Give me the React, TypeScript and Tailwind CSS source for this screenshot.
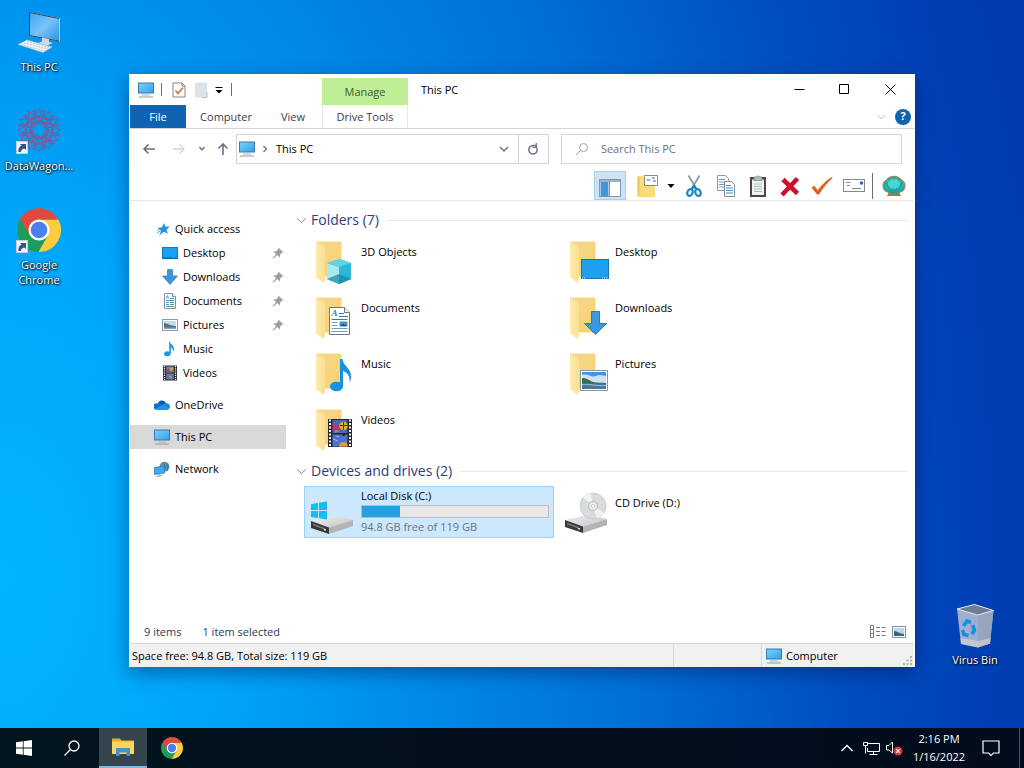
import { useState } from "react";
import type { ReactNode } from "react";

type IconProps = { className?: string };

/* ---------- small icons ---------- */

function PcIcon({ className = "size-4" }: IconProps) {
  return (
    <svg viewBox="0 0 16 16" className={className} aria-hidden="true">
      <defs>
        <linearGradient id="screen" x1="0" y1="0" x2="1" y2="1">
          <stop offset="0" stopColor="#7fd0fb" />
          <stop offset="1" stopColor="#2aa3ee" />
        </linearGradient>
      </defs>
      <rect x="0.5" y="1" width="15" height="10" fill="url(#screen)" stroke="#3c7ba6" />
      <path d="M4 13h8" stroke="#9fb4c4" />
      <path d="M1 15h14" stroke="#8f9aa3" />
    </svg>
  );
}

function StarIcon() {
  return (
    <svg viewBox="0 0 16 16" className="size-4" aria-hidden="true">
      <path d="M10 2l1.500 3.800 4.300-.3-3.300 3.200 1.400 4.300-3.900-2.200L6 13.800l.8-4.400-3.300-2.600 4.300-.4z" fill="#2390d8" />
      <path d="M3 9.500l3-1M3 12.200l3-2M5.200 14.200l2-1.500" stroke="#58b4ec" />
    </svg>
  );
}

function DesktopIcon() {
  return (
    <svg viewBox="0 0 16 16" className="size-4" aria-hidden="true">
      <rect x="0.5" y="2.5" width="15" height="11" fill="#18a0f5" stroke="#1479b8" />
      <path d="M1 13h14" stroke="#0d5c92" strokeDasharray="9 1 1 1" />
    </svg>
  );
}

function DownloadIcon() {
  return (
    <svg viewBox="0 0 16 16" className="size-4" aria-hidden="true">
      <path d="M5.5 0.5h5V7h5L8 15.5 0.5 7h5z" fill="#3d96dd" stroke="#2d7cbd" strokeWidth="0.7" />
    </svg>
  );
}

function DocumentIcon() {
  return (
    <svg viewBox="0 0 16 16" className="size-4" aria-hidden="true">
      <path d="M2.5 0.5h8l3 3v12h-11z" fill="#fff" stroke="#8a8f94" />
      <path d="M10.5 0.5v3h3" fill="#fff" stroke="#8a8f94" />
      <path d="M4 5.5l1.5-3 1 3M8 5.5h4M4 7.5h8M4 9.5h3M8 9.5h4M4 11.5h3M8 11.5h4M4 13.5h8" stroke="#4688b5" fill="none" strokeWidth="0.9" />
    </svg>
  );
}

function PictureIcon() {
  return (
    <svg viewBox="0 0 16 16" className="size-4" aria-hidden="true">
      <rect x="0.5" y="2.5" width="15" height="11" fill="#fff" stroke="#8f979d" />
      <rect x="2" y="4" width="12" height="8" fill="#b9dcf2" />
      <path d="M2 6c4 .5 7 3 12 3v3H2z" fill="#4f7382" />
      <path d="M2 10.500h12v1.500H2z" fill="#7fa3bd" />
    </svg>
  );
}

function MusicIcon() {
  return (
    <svg viewBox="0 0 16 16" className="size-4" aria-hidden="true">
      <ellipse cx="5.300" cy="12.800" rx="3.200" ry="2.500" fill="#159ae6" />
      <path d="M7.500 0.500c.6 3 5.500 4 3.800 9.500C11.300 7.500 9.500 6.500 8.500 6.200v6.600h-1z" fill="#159ae6" stroke="#159ae6" strokeWidth="0.6" />
    </svg>
  );
}

function VideoIcon() {
  return (
    <svg viewBox="0 0 16 16" className="size-4" aria-hidden="true">
      <rect x="1" y="0.500" width="14" height="15" fill="#2e2e33" />
      <path d="M2.500 1v14M13.500 1v14" stroke="#f2f2f2" strokeWidth="1.200" strokeDasharray="1.200 1" />
      <rect x="4.200" y="1.500" width="7.600" height="6" fill="#6c7fae" />
      <rect x="4.200" y="8.500" width="7.600" height="6" fill="#5a76b8" />
      <circle cx="9.300" cy="4" r="1.800" fill="#d5a63a" />
      <path d="M4.200 5.500l3-2 1 4h-4z" fill="#a04a66" />
      <circle cx="8.500" cy="12" r="1.500" fill="#c48f40" />
    </svg>
  );
}

function CloudIcon() {
  return (
    <svg viewBox="0 0 16 16" className="size-4" aria-hidden="true">
      <path d="M3.800 7a4.400 4.400 0 0 1 8.400-.8L8.500 9.500l-5 1z" fill="#0d5cb4" />
      <path d="M3.800 6.500C6 6.300 7.500 7 8.500 8l-7 4.500A3 3 0 0 1 3.800 6.500z" fill="#1472c9" />
      <path d="M8.500 8c1.200-1.400 2.500-2 4-1.700a3.300 3.300 0 0 1 1.700 6.200z" fill="#1a86dc" />
      <path d="M1.200 12.200L8.500 8l6 4.300a2.800 2.800 0 0 1-1.500.7H3a3 3 0 0 1-1.800-.8z" fill="#2493e8" />
    </svg>
  );
}

function NetworkIcon() {
  return (
    <svg viewBox="0 0 16 16" className="size-4" aria-hidden="true">
      <circle cx="10.500" cy="5.800" r="5" fill="#5f93b5" />
      <path d="M9 1.500c2 2 3 5 1.500 8M13 2.500c1 2 1 5 0 7" stroke="#2f6484" fill="none" strokeWidth="0.800" />
      <path d="M0.500 6.500l10-1.500v7l-10 1.500z" fill="#3fa9ee" stroke="#2d7fb5" strokeWidth="0.800" />
      <path d="M5 13v1.500M2.500 15.500l5.500-1" stroke="#8297a5" />
    </svg>
  );
}

function PinIcon() {
  return (
    <svg viewBox="0 0 12 12" className="size-3" aria-hidden="true">
      <path d="M6.500 0.500l5 5-1.500.3-1.800 1.800-.4 3-2.600-2.600L1 12l-.5-.5L4 7 1.500 4.500l3-.4L6.300 2z" fill="#9aa0a4" />
    </svg>
  );
}

function ChevronDown({ className = "" }: IconProps) {
  return (
    <svg viewBox="0 0 12 8" className={className} fill="none" stroke="currentColor" aria-hidden="true">
      <path d="M1 1.500l5 5 5-5" />
    </svg>
  );
}

/* ---------- large icons, 48 x 48 ---------- */

function FolderIcon({ children }: { children: ReactNode }) {
  return (
    <svg viewBox="0 0 48 48" className="size-12 shrink-0" aria-hidden="true">
      <defs>
        <linearGradient id="folderBack" x1="0" y1="0" x2="1" y2="1">
          <stop offset="0" stopColor="#f6d88a" />
          <stop offset="1" stopColor="#f7d274" />
        </linearGradient>
        <linearGradient id="folderFront" x1="0" y1="0" x2="1" y2="0">
          <stop offset="0" stopColor="#fdeaac" />
          <stop offset="1" stopColor="#fbdf92" />
        </linearGradient>
      </defs>
      <path d="M7 4.500h24a1.500 1.500 0 0 1 1.500 1.500v33.500H14L7 38z" fill="url(#folderBack)" />
      <path d="M7 4.500l7.500 4.500c1.300.8 1.500 1.500 1.500 3v28c0 3-.8 6-2 5.500L7.500 40.500A2 2 0 0 1 7 39z" fill="url(#folderFront)" />
      {children}
    </svg>
  );
}

const cube = (
  <>
    <path d="M18 26l13-4 11 4v16l-12 5-12-5z" fill="#35bcd4" />
    <path d="M18 26l12 4v17l-12-5z" fill="#a5e8ef" />
    <path d="M30 30l12-4v16l-12 5z" fill="#2cb7d6" />
    <path d="M18 26l13-4 11 4-12 4z" fill="#5fd3e4" />
    <path d="M18 42l12-5 12 5-12 5z" fill="#0f86a3" opacity="0.7" />
  </>
);

const desktopScreen = (
  <>
    <rect x="18.500" y="22.500" width="27" height="19" fill="#1d9ff2" stroke="#1876b5" />
    <path d="M19 41h26" stroke="#d7efff" strokeDasharray="1 1 1 17 1 1 1 1 1 1" />
  </>
);

const documentSheet = (
  <>
    <path d="M20.500 14.500h15l5 5v22h-20z" fill="#fff" stroke="#6f767c" />
    <path d="M35.500 14.500v5h5" fill="#f2f5f7" stroke="#6f767c" />
    <text x="22.500" y="23" fontSize="9" fontStyle="italic" fontWeight="700" fill="#2c7fc0" fontFamily="Liberation Serif, serif">
      A
    </text>
    <path d="M30 20.500h5M30 23.500h9M22.500 26.500h16" stroke="#2c7fc0" />
    <rect x="30.500" y="28.500" width="8" height="5" fill="#468fc9" />
    <path d="M31 33l3-2 4 2z" fill="#274b60" />
    <path d="M22.500 29.500h6M22.500 32.500h6M22.500 35.500h16M22.500 38.500h16" stroke="#73a0bf" />
  </>
);

const downloadArrow = (
  <path d="M28.500 18.500h8v12h7L32.500 41.500 21.500 30.500h7z" fill="#3a97e0" stroke="#2f78b5" />
);

const musicNote = (
  <>
    <ellipse cx="27.500" cy="37.500" rx="6.500" ry="4.800" fill="#1494e0" />
    <path d="M31 10h2.500c.5 7.500 8.500 8 8.500 18 0 2-.5 4-1.200 5.500C41 26 37.500 23 34 22v15.500h-3z" fill="#1494e0" />
  </>
);

const pictureFrame = (
  <>
    <rect x="17.500" y="21.500" width="27" height="20" fill="#fff" stroke="#8b959c" />
    <rect x="19" y="23" width="24" height="17" fill="#4e8fe0" />
    <path d="M19 26c6-2 9 3 14 1s7 0 10 0v7H19z" fill="#cbe3f6" />
    <path d="M19 29c3-.5 6 1 9 3s9 1.500 15 2v2H19z" fill="#3d6a4a" />
    <path d="M19 34.500h24V40H19z" fill="#45799b" />
    <path d="M19 35.500c8-1 14 2 24 1" stroke="#9cc0d3" fill="none" />
  </>
);

const filmStrip = (
  <>
    <rect x="19" y="14" width="24" height="28" fill="#26262b" />
    <path d="M21 14.500v27M41 14.500v27" stroke="#f4f4f4" strokeWidth="2" strokeDasharray="2 1.500" />
    <rect x="23.500" y="15" width="15" height="13" fill="#4767bd" />
    <rect x="23.500" y="29.500" width="15" height="12" fill="#4b72d2" />
    <circle cx="34.500" cy="21" r="4.200" fill="#e8b021" />
    <path d="M31 20.500h8M34.500 17v8" stroke="#51301e" />
    <path d="M23.500 19l5 1 3 4-8 2z" fill="#c7325d" />
    <path d="M26 25l5 1-5 2z" fill="#5eb44e" />
    <path d="M32 28h5l-1.500 3h-2z" fill="#37291e" />
    <path d="M30 41.500a4.500 4.500 0 0 1 8.500-2v2z" fill="#e59b24" />
    <path d="M24 34l5 2M27 31l3 1" stroke="#9ab1ef" />
  </>
);

function DriveBody() {
  return (
    <>
      <defs>
        <linearGradient id="driveTop" x1="0" y1="0" x2="1" y2="1">
          <stop offset="0" stopColor="#f2f2f2" />
          <stop offset="1" stopColor="#c4c4c6" />
        </linearGradient>
      </defs>
      <path d="M2 32l24-5.500 18 4.500-24 7.500z" fill="url(#driveTop)" />
      <path d="M20 38.500l24-7.500v6l-24 8z" fill="#b4b4b7" />
      <path d="M2 32l18 6.500V45L2 39z" fill="#37383b" />
      <path d="M4 35.500l12 4.500" stroke="#77787c" strokeWidth="1.500" />
      <path d="M15 40.500l2 .6" stroke="#e3ffe5" strokeWidth="1.500" />
    </>
  );
}

function LocalDiskIcon() {
  return (
    <svg viewBox="0 0 48 48" className="size-12 shrink-0" aria-hidden="true">
      <DriveBody />
      <path d="M2 15l7-1v7H2zM10 13.800L18 12.500V21h-8zM2 22h7v7l-7-1zM10 22h8v8.500l-8-1.300z" fill="#17bdef" />
    </svg>
  );
}

function CdDriveIcon() {
  return (
    <svg viewBox="0 0 48 48" className="size-12 shrink-0" aria-hidden="true">
      <DriveBody />
      <circle cx="30" cy="18" r="13" fill="#d9dcde" stroke="#b9bdc0" strokeWidth="0.600" />
      <path d="M30 18L20 9.500A13 13 0 0 1 28 5.200zM30 18l11 7a13 13 0 0 1-7 5.400z" fill="#f0f2f3" />
      <circle cx="30" cy="18" r="4.500" fill="#eceff0" stroke="#b3b8bb" />
      <circle cx="30" cy="18" r="1.800" fill="#fff" stroke="#aab0b3" strokeWidth="0.600" />
    </svg>
  );
}

/* ---------- desktop icons ---------- */

function ShortcutArrow() {
  return (
    <>
      <rect x="1.500" y="34.500" width="11" height="12" fill="#f4f7fa" stroke="#c6ccd3" />
      <path d="M3.500 45c-.5-3.500 1-5.500 3-6.200L5 37h6v6l-1.800-1.500C7 42 6 43 6 45z" fill="#2b548c" />
    </>
  );
}

function ComputerArt() {
  return (
    <svg viewBox="0 0 48 48" className="size-12" aria-hidden="true">
      <defs>
        <linearGradient id="bigScreen" x1="0" y1="0" x2="1" y2="1">
          <stop offset="0" stopColor="#3fa6ee" />
          <stop offset="0.500" stopColor="#78c4f8" />
          <stop offset="1" stopColor="#2c92e4" />
        </linearGradient>
      </defs>
      <path d="M14.500 4.500l30 6V33l-30-5.500z" fill="url(#bigScreen)" stroke="#b7cad6" />
      <path d="M44 10.500l-29.500-6v23L44 33" fill="none" stroke="#29465a" />
      <path d="M27 29.500l7 1.500v3l4 1-6 2.500-9-2.500 4-1.500z" fill="#cfd8de" />
      <path d="M3 36.500l9-4.500 25 7-9 5.500z" fill="#eef2f5" stroke="#b2bfc8" strokeWidth="0.600" />
      <path d="M6 37l24 6M9 35l24 6M12 33.500l22 6" stroke="#a9b5be" strokeWidth="0.700" strokeDasharray="2 1" />
    </svg>
  );
}

const PETALS = [0, 30, 60, 90, 120, 150, 180, 210, 240, 270, 300, 330];

function DataWagonArt() {
  return (
    <svg viewBox="0 0 48 48" className="size-12" aria-hidden="true">
      <g fill="none" stroke="#8a4f8f" strokeWidth="1" opacity="0.800">
        {PETALS.map((deg) => (
          <g key={deg} transform={`rotate(${deg} 24 23)`}>
            <path d="M24 17l-4.500-7L24 1.500l4.500 8.500z" />
            <path d="M17 3.500l7 7 7-7M20 16l4-3 4 3" />
            <circle cx="24" cy="10" r="1.200" fill="#c63e5c" stroke="#c63e5c" />
            <circle cx="19" cy="4" r="1" fill="#c63e5c" stroke="none" />
            <circle cx="24" cy="16" r="1.200" fill="#c63e5c" stroke="none" />
          </g>
        ))}
      </g>
      <ShortcutArrow />
    </svg>
  );
}

function ChromeRings() {
  return (
    <>
      <path d="M24 24L5 13A22 22 0 0 1 43 13z" fill="#dd4b3e" />
      <path d="M24 24L43 13a22 22 0 0 1-19.500 33z" fill="#fcce3e" />
      <path d="M24 24v22A22 22 0 0 1 5 13z" fill="#1d9d59" />
      <path d="M24 13.500h19.300L33 29z" fill="#fcce3e" />
      <path d="M24 13.500h19.300L43 13 24 11z" fill="#dd4b3e" />
      <path d="M14.900 29.200L5 13l12 3z" fill="#dd4b3e" />
      <path d="M33 29.200L23.500 46 19 33z" fill="#1d9d59" />
      <circle cx="24" cy="24" r="10.500" fill="#fff" />
      <circle cx="24" cy="24" r="8.300" fill="#4a80ee" />
    </>
  );
}

function ChromeArt() {
  return (
    <svg viewBox="0 0 48 48" className="size-12" aria-hidden="true">
      <ChromeRings />
      <ShortcutArrow />
    </svg>
  );
}

function BinArt() {
  return (
    <svg viewBox="0 0 48 48" className="size-12" aria-hidden="true">
      <path d="M6 8l4 35 17 3.500 12-4L42.500 9.500l-16 4.500z" fill="#b9c3d3" opacity="0.850" />
      <path d="M26.500 14L27 46.500l12-4L42.500 9.500z" fill="#95a2ba" opacity="0.850" />
      <path d="M9.500 37l17.500 3 12.500-3-.5 5.500-12 4-17-3.500z" fill="#dcd9cf" opacity="0.600" />
      <path d="M6 8l17.500-4.500L42.500 9.500l-16 4.500z" fill="#6d7c93" stroke="#e6ebf2" />
      <g fill="none" stroke="#178fe0" strokeWidth="3.600">
        <path d="M12.500 25l3.500-5 4 1.500M21.500 24l2 5-2.500 4M17.500 34.500l-4.500-1-1.500-4.500" />
      </g>
    </svg>
  );
}

function DesktopShortcut({ label, children }: { label: string; children: ReactNode }) {
  return (
    <button type="button" className="flex w-[76px] flex-col items-center">
      {children}
      <span className="mt-[3px] max-w-[72px] leading-[15px] text-white [text-shadow:1px_1px_2px_#000,0_0_2px_#000]">
        {label}
      </span>
    </button>
  );
}

/* ---------- window chrome ---------- */

function TitleBar() {
  return (
    <header className="flex h-[31px] items-center">
      <div className="flex w-[192px] items-center pl-2">
        <PcIcon />
        <span className="ml-[7px] h-[13px] w-px bg-gray-500" />
        <button type="button" aria-label="Properties" className="ml-[10px]">
          <svg viewBox="0 0 14 16" className="h-4 w-[14px]">
            <path d="M1 1h9l3 3v11H1z" fill="#fff" stroke="#8d8580" />
            <path d="M10 1v3h3" fill="none" stroke="#8d8580" />
            <path d="M3.500 8.500l2.500 3 5-6" fill="none" stroke="#d0703c" strokeWidth="1.700" />
          </svg>
        </button>
        <button type="button" aria-label="New folder" className="ml-2">
          <svg viewBox="0 0 14 16" className="h-4 w-[14px]">
            <path d="M1 0.500h12v15H1z" fill="#dce3eb" />
            <path d="M13 9.500v6H8" fill="none" stroke="#b9c3ce" />
          </svg>
        </button>
        <button type="button" aria-label="Customize Quick Access Toolbar" className="ml-[7px]">
          <svg viewBox="0 0 8 8" className="size-2">
            <path d="M0.500 1.500h7" stroke="#000" />
            <path d="M0.500 4h7L4 7.500z" />
          </svg>
        </button>
        <span className="ml-2 h-[13px] w-px bg-gray-500" />
      </div>
      <div className="flex h-[27px] w-[86px] items-center justify-center self-end bg-[#c0ee96] pt-0.5 text-[#3d5a2c]">
        Manage
      </div>
      <h1 className="ml-[13px] flex-1 pt-0.5">This PC</h1>
      <button type="button" aria-label="Minimize" className="flex h-full w-[45px] items-center justify-center">
        <svg viewBox="0 0 11 11" className="size-[11px]">
          <path d="M0.500 5.500h10" stroke="#000" />
        </svg>
      </button>
      <button type="button" aria-label="Maximize" className="flex h-full w-[45px] items-center justify-center">
        <svg viewBox="0 0 11 11" className="size-[11px]">
          <path d="M0.500 0.500h9v9h-9z" fill="none" stroke="#000" />
        </svg>
      </button>
      <button type="button" aria-label="Close" className="flex h-full w-[47px] items-center justify-center">
        <svg viewBox="0 0 11 11" className="size-[11px]">
          <path d="M0.500 0.500l10 10M10.500 0.500l-10 10" stroke="#000" />
        </svg>
      </button>
    </header>
  );
}

function RibbonTabs() {
  return (
    <nav className="flex h-6 items-center border-b border-gray-300 text-gray-700">
      <button type="button" className="h-full w-14 bg-[#0f63b0] pt-0.5 text-white">
        File
      </button>
      <button type="button" className="h-full w-20 pt-0.5">
        Computer
      </button>
      <button type="button" className="h-full w-[54px] pt-0.5">
        View
      </button>
      <button type="button" className="ml-0.5 h-full w-[86px] border-x border-gray-200 pt-0.5">
        Drive Tools
      </button>
      <span className="flex-1" />
      <button type="button" aria-label="Expand the Ribbon" className="text-gray-400">
        <ChevronDown className="h-[6px] w-[9px]" />
      </button>
      <button
        type="button"
        aria-label="Help"
        className="mr-[3px] ml-[9px] flex size-4 items-center justify-center rounded-full bg-[#0f63b0] font-bold text-white"
      >
        ?
      </button>
    </nav>
  );
}

function AddressRow() {
  const [query, setQuery] = useState("");

  return (
    <div className="flex items-center pt-[5px] pr-3">
      <div className="flex w-[106px] shrink-0 items-center text-gray-500">
        <button type="button" aria-label="Back" className="ml-3">
          <svg viewBox="0 0 14 12" className="h-3 w-[14px]" fill="none" stroke="currentColor" strokeWidth="1.600">
            <path d="M13 6H2M6.500 1.500L2 6l4.500 4.500" />
          </svg>
        </button>
        <button type="button" aria-label="Forward" className="ml-4 text-gray-300">
          <svg viewBox="0 0 14 12" className="h-3 w-[14px]" fill="none" stroke="currentColor" strokeWidth="1.300">
            <path d="M1 6h11M7.500 1.500L12 6l-4.500 4.500" />
          </svg>
        </button>
        <button type="button" aria-label="Recent locations" className="ml-3">
          <svg viewBox="0 0 8 6" className="h-[6px] w-2" fill="none" stroke="currentColor" strokeWidth="1.400">
            <path d="M1.500 1L4 4l2.500-3" />
          </svg>
        </button>
        <button type="button" aria-label="Up" className="ml-[11px]">
          <svg viewBox="0 0 12 14" className="h-[14px] w-3" fill="none" stroke="currentColor" strokeWidth="1.600">
            <path d="M6 13V2M1.500 6.500L6 2l4.500 4.500" />
          </svg>
        </button>
      </div>
      <div className="flex h-[30px] flex-[11_1_0%] items-center border border-gray-300">
        <PcIcon className="ml-0.5 h-4 w-4" />
        <svg viewBox="0 0 6 8" className="ml-[7px] h-2 w-[6px] text-gray-500" fill="none" stroke="currentColor" strokeWidth="1.300">
          <path d="M1.500 1L4.500 4l-3 3" />
        </svg>
        <span className="ml-2 flex-1">This PC</span>
        <button type="button" aria-label="Previous locations" className="mr-[9px] text-gray-500">
          <svg viewBox="0 0 10 8" className="h-2 w-[10px]" fill="none" stroke="currentColor" strokeWidth="1.500">
            <path d="M1 2l4 4 4-4" />
          </svg>
        </button>
        <button
          type="button"
          aria-label="Refresh"
          className="flex h-full w-[30px] items-center justify-center border-l border-gray-300 text-gray-500"
        >
          <svg viewBox="0 0 12 12" className="size-3" fill="none" stroke="currentColor" strokeWidth="1.500">
            <path d="M9.800 5A4.200 4.200 0 1 1 6 2.600h3" />
            <path d="M9.300 0v4.300H5.500" strokeWidth="1.300" />
          </svg>
        </button>
      </div>
      <label className="ml-3 flex h-[30px] flex-[12_1_0%] items-center border border-gray-300">
        <svg viewBox="0 0 14 14" className="ml-[13px] size-[14px] text-gray-400" fill="none" stroke="currentColor">
          <circle cx="8.500" cy="5.500" r="4" />
          <path d="M5.500 8.500L1 13" />
        </svg>
        <input
          type="text"
          aria-label="Search This PC"
          placeholder="Search This PC"
          value={query}
          onChange={(e) => setQuery(e.target.value)}
          className="ml-3 min-w-0 flex-1 bg-transparent outline-none placeholder:text-gray-500"
        />
      </label>
    </div>
  );
}

function ToolButton({ label, children }: { label: string; children: ReactNode }) {
  return (
    <button type="button" aria-label={label} className="flex w-8 items-center justify-center">
      <svg viewBox="0 0 24 24" className="size-6">
        {children}
      </svg>
    </button>
  );
}

function Toolbar() {
  return (
    <div className="mt-[7px] flex h-[30px] items-center justify-end border-b border-gray-200 pr-2">
      <button
        type="button"
        aria-label="Navigation pane"
        className="mr-[6px] flex h-[29px] w-8 items-center justify-center border border-[#a6cfea] bg-[#cce4f4]"
      >
        <svg viewBox="0 0 22 18" className="mt-1 h-[18px] w-[22px]">
          <rect x="0.500" y="0.500" width="21" height="17" fill="#fff" stroke="#8298aa" />
          <path d="M1 2h20" stroke="#8298aa" strokeWidth="1.500" />
          <rect x="1.500" y="3" width="8" height="14" fill="#3f96dc" />
          <path d="M10.500 3v14" stroke="#8298aa" />
        </svg>
      </button>
      <ToolButton label="Folder options">
        <path d="M1 2h6v1h12v20H1z" fill="#f8dc7f" />
        <path d="M3 3v18" stroke="#e9bd4b" />
        <path d="M8.500 1.500h13v10h-13z" fill="#fff" stroke="#7d8b96" />
        <path d="M10.500 6h4M16 4h3M17 7h3" stroke="#3f6f95" />
      </ToolButton>
      <button type="button" aria-label="More folder options" className="flex w-[14px] justify-center">
        <svg viewBox="0 0 8 4" className="h-1 w-2">
          <path d="M0.500 0h7L4 4z" />
        </svg>
      </button>
      <ToolButton label="Cut">
        <path d="M6.500 1.500L14.500 15M17.500 1.500L9.500 15" stroke="#8f9ca5" strokeWidth="1.800" fill="none" />
        <g fill="none" stroke="#1c86c4" strokeWidth="2.200">
          <ellipse cx="8" cy="18.500" rx="2.600" ry="3.500" transform="rotate(25 8 18.500)" />
          <ellipse cx="16" cy="18.500" rx="2.600" ry="3.500" transform="rotate(-25 16 18.500)" />
          <path d="M9.500 15.500L12 12l2.500 3.500" />
        </g>
      </ToolButton>
      <ToolButton label="Copy">
        <path d="M3.500 1.500h8l3 3v12h-11z" fill="#fff" stroke="#8a9aa6" />
        <path d="M5 5.500h6M5 8h7M5 10.500h7M5 13h7" stroke="#6c9cbc" />
        <path d="M10.500 7.500h7l3 3v12h-10z" fill="#fff" stroke="#7f909d" />
        <path d="M12 11.500h5M12 14h7M12 16.500h7M12 19h7" stroke="#4b8dba" />
      </ToolButton>
      <ToolButton label="Paste">
        <rect x="4" y="3" width="16" height="20" fill="#534641" />
        <rect x="6" y="5.500" width="12" height="15.500" fill="#eef4f0" />
        <path d="M8 10h8M8 12.500h8M8 15h8M8 17.500h8" stroke="#aabdb9" />
        <path d="M8 3h2.500a1.600 1.600 0 0 1 3 0H16v3.500H8z" fill="#b8bcbe" stroke="#777c7f" strokeWidth="0.700" />
      </ToolButton>
      <ToolButton label="Delete">
        <path d="M5 5.500l14.500 14M19.500 4.500L4 21" stroke="#d00f2b" strokeWidth="4.600" />
      </ToolButton>
      <ToolButton label="Rename">
        <path d="M1.500 13.500l2.800-1.800 3.500 4.500C12 10 17 6 21.500 3l1 1C17 9 13 14 9 20.500H7z" fill="#e2611f" />
      </ToolButton>
      <ToolButton label="Properties">
        <rect x="1.500" y="5.500" width="21" height="12" fill="#fff" stroke="#83898e" />
        <path d="M3.500 8.500h5M5 11.500h3M10 14.500h9" stroke="#7d8d9b" />
        <rect x="18" y="7.500" width="3" height="3" fill="#2d64b8" />
      </ToolButton>
      <span className="ml-0.5 h-[26px] w-px bg-gray-500" />
      <button type="button" aria-label="Classic Shell settings" className="ml-[9px]">
        <svg viewBox="0 0 24 24" className="size-6">
          <path d="M6.500 19h11l1.500 3H5z" fill="#b76f35" />
          <path
            d="M12 20.500c-3 0-4.500-.5-6-2.500C3 17.500 1 15 1 11c.5-2.500 1.500-4 3.500-5C6.500 3.500 9 2.300 12 2.300S17.500 3.500 19.500 6c2 1 3 2.500 3.500 5 0 4-2 6.500-5 7-1.500 2-3 2.500-6 2.500z"
            fill="#22b5b5"
            stroke="#a3854a"
            strokeWidth="1.200"
          />
          <path
            d="M12 20V3M11 20L7 4.500M13 20l4-15.500M10 19.500L3.500 8M14 19.500L20.500 8M9 18.500L2 14M15 18.500l7-4.500"
            stroke="#11898c"
            strokeWidth="0.700"
            fill="none"
          />
          <ellipse cx="12" cy="10" rx="6" ry="5" fill="#6fece8" opacity="0.600" />
        </svg>
      </button>
    </div>
  );
}

/* ---------- navigation pane ---------- */

type NavEntry = { label: string; icon: ReactNode; pinned?: boolean };

const QUICK_ACCESS: NavEntry[] = [
  { label: "Desktop", icon: <DesktopIcon />, pinned: true },
  { label: "Downloads", icon: <DownloadIcon />, pinned: true },
  { label: "Documents", icon: <DocumentIcon />, pinned: true },
  { label: "Pictures", icon: <PictureIcon />, pinned: true },
  { label: "Music", icon: <MusicIcon /> },
  { label: "Videos", icon: <VideoIcon /> },
];

const NAV_ROOTS: NavEntry[] = [
  { label: "OneDrive", icon: <CloudIcon /> },
  { label: "This PC", icon: <PcIcon /> },
  { label: "Network", icon: <NetworkIcon /> },
];

function NavigationPane({ current, onSelect }: { current: string; onSelect: (label: string) => void }) {
  return (
    <aside className="w-[156px] shrink-0 pt-4">
      <button type="button" className="flex h-6 w-full items-center gap-[5px] pl-6">
        <StarIcon />
        Quick access
      </button>
      <ul>
        {QUICK_ACCESS.map((item) => (
          <li key={item.label}>
            <button type="button" className="flex h-6 w-full items-center gap-[5px] pr-0.5 pl-8">
              {item.icon}
              <span className="flex-1 text-left">{item.label}</span>
              {item.pinned && <PinIcon />}
            </button>
          </li>
        ))}
      </ul>
      <ul className="mt-2 space-y-2">
        {NAV_ROOTS.map((item) => (
          <li key={item.label}>
            <button
              type="button"
              onClick={() => onSelect(item.label)}
              className={`flex h-6 w-full items-center gap-[5px] pl-6 ${current === item.label ? "bg-[#d9d9d9]" : ""}`}
            >
              {item.icon}
              {item.label}
            </button>
          </li>
        ))}
      </ul>
    </aside>
  );
}

/* ---------- file area ---------- */

const FOLDERS = [
  { label: "3D Objects", art: cube },
  { label: "Desktop", art: desktopScreen },
  { label: "Documents", art: documentSheet },
  { label: "Downloads", art: downloadArrow },
  { label: "Music", art: musicNote },
  { label: "Pictures", art: pictureFrame },
  { label: "Videos", art: filmStrip },
];

const DISK = { total: 119, free: 94.8 };

function GroupHeading({ children }: { children: ReactNode }) {
  return (
    <h2 className="flex h-5 items-center text-sm text-[#2f3a80]">
      <ChevronDown className="mr-1 h-[7px] w-[11px] text-gray-500" />
      {children}
      <span className="ml-2 h-px flex-1 bg-gray-200" />
    </h2>
  );
}

function FileArea() {
  const used = ((DISK.total - DISK.free) / DISK.total) * 100;

  return (
    <main className="flex-1 pt-[9px] pr-[6px] pl-[10px]">
      <GroupHeading>Folders (7)</GroupHeading>
      <div className="mt-[5px] grid grid-cols-[repeat(auto-fill,250px)] gap-1 pl-2">
        {FOLDERS.map((folder) => (
          <button key={folder.label} type="button" className="flex h-[52px] gap-1 pt-0.5 pl-[5px] text-left">
            <FolderIcon>{folder.art}</FolderIcon>
            <span className="pt-2 leading-[14px]">{folder.label}</span>
          </button>
        ))}
      </div>
      <div className="mt-[6px]">
        <GroupHeading>Devices and drives (2)</GroupHeading>
      </div>
      <div className="mt-[5px] grid grid-cols-[repeat(auto-fill,250px)] gap-1 pl-2">
        <button
          type="button"
          className="flex h-[52px] gap-1 border border-[#99d1ff] bg-[#cce8ff] px-1 pt-0.5 text-left leading-[14px]"
        >
          <LocalDiskIcon />
          <span className="flex flex-1 flex-col gap-0.5">
            <span>Local Disk (C:)</span>
            <span className="block h-[13px] border border-[#c4b8b8] bg-[#e9e7e7]">
              <span className="block h-full bg-[#26a0da]" style={{ width: `${used}%` }} />
            </span>
            <span className="text-gray-500">
              {DISK.free} GB free of {DISK.total} GB
            </span>
          </span>
        </button>
        <button type="button" className="flex h-[52px] gap-1 pt-0.5 pl-[5px] text-left">
          <CdDriveIcon />
          <span className="pt-2 leading-[14px]">CD Drive (D:)</span>
        </button>
      </div>
    </main>
  );
}

function StatusRows() {
  return (
    <footer>
      <div className="flex h-[23px] items-center pr-2 pl-[14px] text-[#2d3a55]">
        <span className="pt-0.5">9 items</span>
        <span className="ml-[21px] flex-1 pt-0.5">1 item selected</span>
        <button type="button" aria-label="Details view">
          <svg viewBox="0 0 18 13" className="h-[13px] w-[18px]" fill="none" stroke="#767b80">
            <path d="M1.500 0.500h3v12h-3zM1.500 4.500h3M1.500 8.500h3" />
            <path d="M7 2.500h4M12.500 2.500h4M7 6.500h4M12.500 6.500h4M7 10.500h4M12.500 10.500h4" />
          </svg>
        </button>
        <button type="button" aria-label="Large icons view" className="ml-[5px]">
          <svg viewBox="0 0 14 12" className="h-3 w-[14px]">
            <rect x="0.500" y="0.500" width="13" height="11" fill="#fff" stroke="#7f95a6" />
            <rect x="2" y="2" width="10" height="8" fill="#b6d8ef" />
            <path d="M2 5c4 0 5 3 10 3v2H2z" fill="#35657f" />
          </svg>
        </button>
      </div>
      <div className="flex h-6 items-center border-t border-[#d7d7d7] bg-[#f0f0f0]">
        <span className="flex-1 pt-0.5 pl-0.5">Space free: 94.8 GB, Total size: 119 GB</span>
        <span className="h-full w-[88px] border-l border-[#d7d7d7]" />
        <span className="flex h-full w-[153px] items-center gap-1 border-l border-[#d7d7d7] pl-1">
          <PcIcon />
          <span className="flex-1 pt-0.5">Computer</span>
          <svg viewBox="0 0 9 9" className="mr-0.5 mb-0.5 size-[9px] self-end" fill="#b5b5b5">
            <path d="M7 0h2v2H7zM7 3.500h2v2H7zM7 7h2v2H7zM3.500 3.500h2v2h-2zM3.500 7h2v2h-2zM0 7h2v2H0z" />
          </svg>
        </span>
      </div>
    </footer>
  );
}

function ExplorerWindow() {
  const [current, setCurrent] = useState("This PC");

  return (
    <section className="absolute top-[74px] right-[109px] bottom-[61px] left-[129px] flex flex-col bg-white px-px shadow-[0_6px_18px_rgba(0,20,80,0.45)]">
      <TitleBar />
      <RibbonTabs />
      <AddressRow />
      <Toolbar />
      <div className="flex min-h-0 flex-1 overflow-hidden">
        <NavigationPane current={current} onSelect={setCurrent} />
        <FileArea />
      </div>
      <StatusRows />
    </section>
  );
}

/* ---------- taskbar ---------- */

function Taskbar() {
  return (
    <footer className="flex h-10 items-center bg-linear-to-r from-[#02141e] to-[#020c1c] text-white">
      <button type="button" aria-label="Start" className="flex h-full w-12 items-center justify-center">
        <svg viewBox="0 0 16 16" className="size-4" fill="#fff">
          <path d="M0 2.300L6.800 1.300V7.600H0zM7.600 1.200L16 0v7.600H7.600zM0 8.400h6.800v6.300L0 13.700zM7.600 8.400H16V16l-8.400-1.200z" />
        </svg>
      </button>
      <button type="button" aria-label="Search" className="flex h-full w-12 items-center justify-center">
        <svg viewBox="0 0 16 16" className="size-4" fill="none" stroke="#fff" strokeWidth="1.300">
          <circle cx="10" cy="6" r="5" />
          <path d="M6.500 9.500L0.500 15.500" />
        </svg>
      </button>
      <button
        type="button"
        aria-label="File Explorer"
        className="ml-[3px] flex h-full w-12 items-center justify-center border-b-2 border-[#76b9ed] bg-[#36444d]"
      >
        <svg viewBox="0 0 22 20" className="h-5 w-[22px]">
          <path d="M0 1.500h8l1.500 2H22V17H0z" fill="#e8a92e" />
          <path d="M0 4.500h22V17H0z" fill="#fbd65c" />
          <path d="M4 19v-8h14v8h-3.500v-3.500h-7V19z" fill="#4a90c8" />
        </svg>
      </button>
      <button type="button" aria-label="Google Chrome" className="ml-px flex h-full w-12 items-center justify-center">
        <svg viewBox="0 0 48 48" className="size-6">
          <ChromeRings />
        </svg>
      </button>
      <span className="flex-1" />
      <button type="button" aria-label="Show hidden icons">
        <svg viewBox="0 0 12 8" className="h-2 w-3" fill="none" stroke="#fff" strokeWidth="1.300">
          <path d="M0.500 7L6 1.500 11.500 7" />
        </svg>
      </button>
      <button type="button" aria-label="Network" className="ml-[10px]">
        <svg viewBox="0 0 17 15" className="h-[15px] w-[17px]" fill="none" stroke="#fff">
          <path d="M5 2.500h11.500v8H4.500V7M10.500 10.500v3M6.500 13.500h8" />
          <path d="M0.500 1.500h4v3h-4zM2.500 4.500v8" />
        </svg>
      </button>
      <button type="button" aria-label="Volume muted" className="ml-[6px]">
        <svg viewBox="0 0 17 16" className="h-4 w-[17px]">
          <path d="M0.500 5.500h2.500L6.500 2v11L3 10H0.500z" fill="none" stroke="#fff" />
          <circle cx="12" cy="11" r="4.500" fill="#d5353c" />
          <path d="M10.200 9.200l3.600 3.600M13.800 9.200l-3.600 3.600" stroke="#fff" strokeWidth="1.200" />
        </svg>
      </button>
      <time className="ml-[9px] w-[54px] text-center leading-[18px] whitespace-nowrap">
        2:16 PM
        <br />
        1/16/2022
      </time>
      <button type="button" aria-label="Notifications" className="ml-4">
        <svg viewBox="0 0 18 17" className="h-[17px] w-[18px]" fill="none" stroke="#fff" strokeWidth="1.200">
          <path d="M1 1h16v12h-5.500L9 15.500 6.500 13H1z" />
        </svg>
      </button>
      <span className="ml-[19px] h-full w-[5px] border-l border-[#4a5663]" />
    </footer>
  );
}

export default function App() {
  return (
    <div className="flex h-screen flex-col overflow-hidden bg-[radial-gradient(ellipse_108%_230%_at_0%_75%,#00b4ff_0%,#00a6fa_20%,#008cea_38%,#006fd6_58%,#004fc2_76%,#003cb2_92%,#003ab0_100%)] font-['Open_Sans','Noto_Sans',sans-serif] text-[11px] text-black">
      <div className="relative flex-1">
        <div className="absolute top-2 left-px flex flex-col gap-[33px]">
          <DesktopShortcut label="This PC">
            <ComputerArt />
          </DesktopShortcut>
          <DesktopShortcut label="DataWagon...">
            <DataWagonArt />
          </DesktopShortcut>
          <DesktopShortcut label="Google Chrome">
            <ChromeArt />
          </DesktopShortcut>
        </div>
        <div className="absolute right-[11px] bottom-[61px]">
          <DesktopShortcut label="Virus Bin">
            <BinArt />
          </DesktopShortcut>
        </div>
        <ExplorerWindow />
      </div>
      <Taskbar />
    </div>
  );
}
